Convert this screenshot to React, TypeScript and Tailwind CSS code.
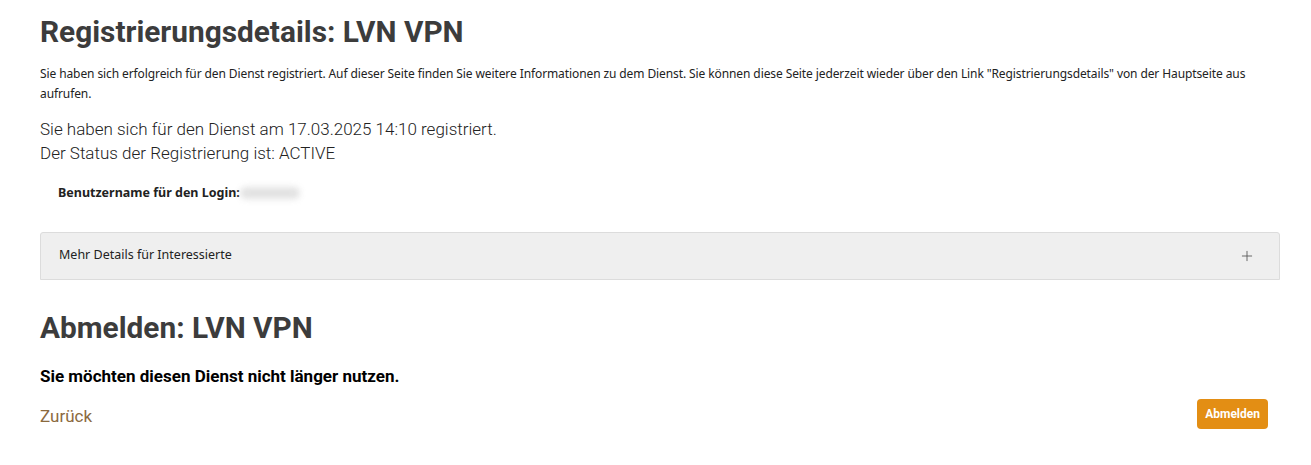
import { Plus } from "lucide-react";

const roboto = "font-['Roboto',sans-serif]";
const ui = "font-['Noto_Sans','Open_Sans',sans-serif]";

export default function App() {
  return (
    <div className="bg-white min-h-[465px] pl-10 pr-[31px] pt-[14px] text-[#333]">
      <h1 className={`${roboto} text-[29.8px] leading-9 font-bold text-[#3c3c3c]`}>
        Registrierungsdetails: LVN VPN
      </h1>
      <p className={`${ui} text-[12px] leading-5 mt-[14px] text-[#222] tracking-[-0.1px]`}>
        Sie haben sich erfolgreich für den Dienst registriert. Auf dieser Seite finden Sie weitere Informationen zu dem
        Dienst. Sie können diese Seite jederzeit wieder über den Link "Registrierungsdetails" von der Hauptseite aus
        aufrufen.
      </p>
      <div className={`${roboto} font-light text-[17px] leading-6 mt-[13px] text-[#222]`}>
        <p>Sie haben sich für den Dienst am 17.03.2025 14:10 registriert.</p>
        <p>Der Status der Registrierung ist: ACTIVE</p>
      </div>
      <div className={`${ui} text-[12.5px] font-bold pl-[18px] mt-[19px] flex items-center text-[#222]`}>
        <span>Benutzername für den Login:</span>
        <span className="inline-block w-[60px] h-[12px] bg-[#cfcfcf] rounded-full blur-[3px] opacity-60" />
      </div>
      <div className="mt-[29px] bg-[#efefef] border border-[#dcdcdc] rounded-t-[3px] h-[48px] flex items-center justify-between pl-[18px] pr-[24px]">
        <span className={`${ui} text-[12.5px] text-[#222]`}>Mehr Details für Interessierte</span>
        <Plus className="w-[16px] h-[16px] text-[#555]" strokeWidth={1.3} />
      </div>
      <h2 className={`${roboto} text-[29.8px] leading-9 font-bold text-[#3c3c3c] mt-[30px]`}>Abmelden: LVN VPN</h2>
      <p className={`${roboto} text-[17px] font-bold mt-[18px] text-black`}>
        Sie möchten diesen Dienst nicht länger nutzen.
      </p>
      <div className="flex items-center justify-between mt-[14px] pr-[12px]">
        <a className={`${roboto} text-[17px] text-[#8b6a3e]`}>Zurück</a>
        <button className={`${roboto} bg-[#e38e14] text-white text-[12px] font-bold rounded-[4px] h-[30px] px-[8px] -mt-[4px]`}>
          Abmelden
        </button>
      </div>
    </div>
  );
}
